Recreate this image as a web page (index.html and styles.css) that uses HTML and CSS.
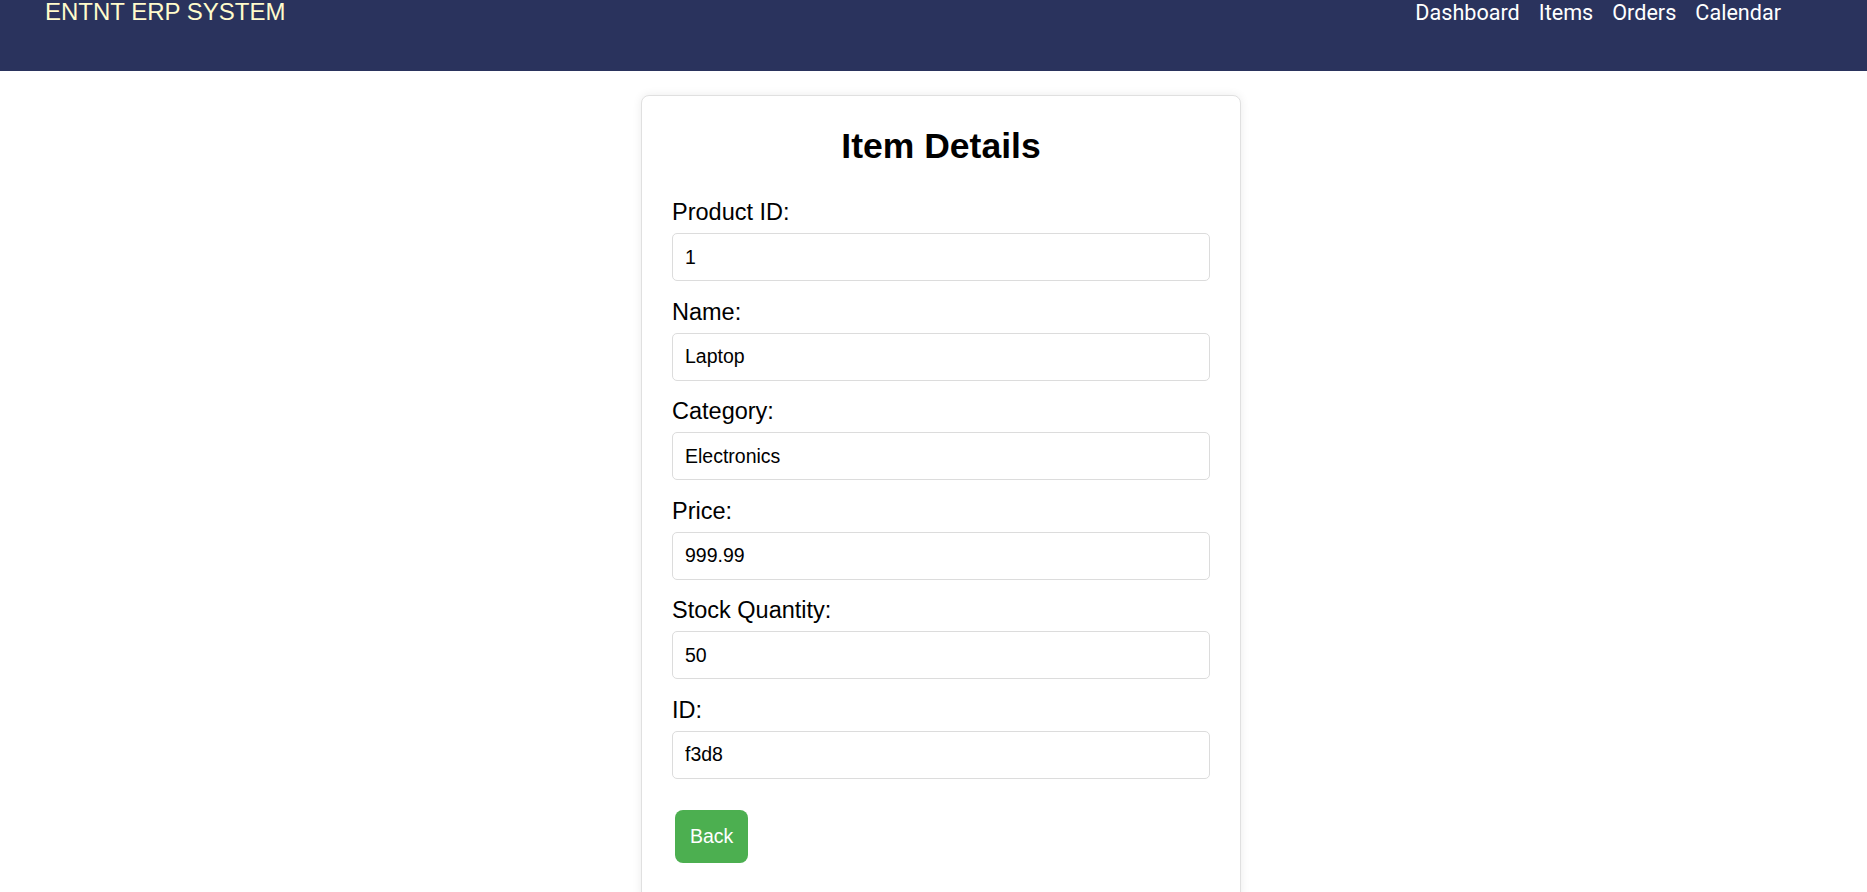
FILE: index.html
```html
<!DOCTYPE html>
<html lang="en">
<head>
<meta charset="utf-8">
<title>ENTNT ERP SYSTEM</title>
<link rel="stylesheet" href="styles.css">
</head>
<body>
<header class="topbar">
  <h1 class="brand">ENTNT ERP SYSTEM</h1>
  <nav class="nav">
    <a class="nav-link" href="#">Dashboard</a>
    <a class="nav-link" href="#">Items</a>
    <a class="nav-link" href="#">Orders</a>
    <a class="nav-link" href="#">Calendar</a>
  </nav>
</header>
<main class="page">
  <section class="card">
    <h2 class="card-title">Item Details</h2>
    <div class="field">
      <label class="field-label">Product ID:</label>
      <input class="field-input" type="text" value="1" readonly>
    </div>
    <div class="field">
      <label class="field-label">Name:</label>
      <input class="field-input" type="text" value="Laptop" readonly>
    </div>
    <div class="field">
      <label class="field-label">Category:</label>
      <input class="field-input" type="text" value="Electronics" readonly>
    </div>
    <div class="field">
      <label class="field-label">Price:</label>
      <input class="field-input" type="text" value="999.99" readonly>
    </div>
    <div class="field">
      <label class="field-label">Stock Quantity:</label>
      <input class="field-input" type="text" value="50" readonly>
    </div>
    <div class="field">
      <label class="field-label">ID:</label>
      <input class="field-input" type="text" value="f3d8" readonly>
    </div>
    <button class="back-btn" type="button">Back</button>
  </section>
</main>
</body>
</html>
```
FILE: styles.css
```css
html {
  overflow: hidden;
}
body {
  margin: 0;
  background: #ffffff;
  font-family: "Liberation Sans", Arial, sans-serif;
  color: #000;
}
.topbar {
  height: 71px;
  background: #2a335d;
  display: flex;
  justify-content: space-between;
  align-items: flex-start;
  padding: 0 86px 0 45px;
}
.brand {
  margin: 0;
  font-family: "Liberation Sans", Arial, sans-serif;
  font-weight: normal;
  font-size: 24px;
  line-height: 23px;
  color: #fffbcc;
}
.nav {
  display: flex;
  gap: 19px;
}
.nav-link {
  font-family: Roboto, "Liberation Sans", sans-serif;
  font-size: 21.6px;
  line-height: 25px;
  color: #ffffff;
  text-decoration: none;
}
.page {
  display: flex;
  justify-content: center;
  padding: 24px 0 0 15px;
}
.card {
  width: 538px;
  padding: 30px 30px 40px;
  border: 1px solid #e0e0e0;
  border-radius: 8px;
  box-shadow: 0 0 10px rgba(0, 0, 0, 0.08);
  background: #fff;
}
.card-title {
  margin: 0 0 32px;
  text-align: center;
  font-size: 35.5px;
  font-weight: bold;
  line-height: 41px;
}
.field-label {
  display: block;
  font-size: 23.5px;
  line-height: 27px;
  margin-bottom: 7px;
}
.field-input {
  display: block;
  box-sizing: border-box;
  width: 100%;
  height: 48px;
  margin: 0 0 17.5px;
  padding: 0 12px;
  border: 1px solid #dcdcdc;
  border-radius: 5px;
  font-family: "Liberation Sans", Arial, sans-serif;
  font-size: 19.5px;
  color: #000;
  background: #fff;
  outline: none;
}
.back-btn {
  margin: 13.5px 0 0 3px;
  height: 53px;
  padding: 0 15px;
  border: none;
  border-radius: 8px;
  background: #4caf50;
  color: #fff;
  font-family: "Liberation Sans", Arial, sans-serif;
  font-size: 19.5px;
  cursor: pointer;
}
```
